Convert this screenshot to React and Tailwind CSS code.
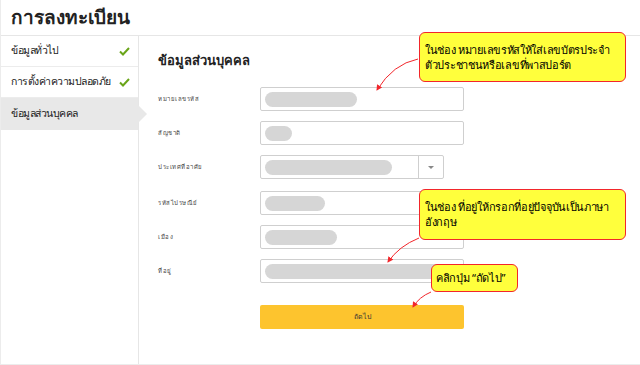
import React from 'react';

const FONT = { fontFamily: '"Noto Sans", "Liberation Sans", "DejaVu Sans", sans-serif' };

const STEPS = [
    { label: 'ข้อมูลทั่วไป', done: true },
    { label: 'การตั้งค่าความปลอดภัย', done: true },
    { label: 'ข้อมูลส่วนบุคคล', active: true },
];

function Check() {
    return (
        <svg width="11" height="9" viewBox="0 0 11 9" className="shrink-0">
            <path d="M1 4.5 L4 7.5 L10 1" fill="none" stroke="#6aa51a" strokeWidth="2" />
        </svg>
    );
}

function Field({ label, pill, gap = 'mb-[10px]' }) {
    return (
        <div className={`flex items-center ${gap}`}>
            <div className="w-[102px] text-[6px] text-[#444] tracking-[0.5px]">{label}</div>
            <div className="w-[204px] h-[24px] border border-[#cfcfcf] rounded-[2px] flex items-center px-[4px]">
                <div className="h-[15px] rounded-full bg-[#d6d6d6]" style={{ width: pill }} />
            </div>
        </div>
    );
}

function Callout({ className, children }) {
    return (
        <div className={`absolute bg-[#ffff3c] border-[1.5px] border-[#f2262b] rounded-[6px] text-[11px] leading-[15px] tracking-[-0.3px] whitespace-nowrap text-black ${className}`}>
            {children}
        </div>
    );
}

export default function App() {
    return (
        <div className="relative w-[640px] h-[365px] bg-white border-l border-b border-[#ececec] overflow-hidden" style={FONT}>
            <div className="h-[36px] border-b border-[#e6e6e6] px-[10px] flex items-center">
                <h1 className="text-[19px] font-bold text-[#222] leading-none">การลงทะเบียน</h1>
            </div>

            <div className="flex h-[329px]">
                {/* steps */}
                <div className="w-[138px] border-r border-[#e6e6e6]">
                    {STEPS.map(s => (
                        <div
                            key={s.label}
                            className={`relative h-[31px] flex items-center justify-between pl-[10px] pr-[8px] text-[10.5px] text-[#222] whitespace-nowrap ${s.active ? 'bg-[#e8e8e8] h-[32px]' : 'border-b border-[#ececec]'}`}
                        >
                            <span className="tracking-[-0.5px]">{s.label}</span>
                            {s.done && <Check />}
                            {s.active && (
                                <div className="absolute right-[-9px] top-[7px] w-0 h-0 border-y-[9px] border-y-transparent border-l-[9px] border-l-[#e8e8e8]" />
                            )}
                        </div>
                    ))}
                </div>

                {/* form */}
                <div className="flex-1 pl-[19px] pt-[15px]">
                    <h2 className="text-[13px] font-bold text-[#222] leading-[18px] mb-[18px]">ข้อมูลส่วนบุคคล</h2>
                    <Field label="หมายเลขรหัส" pill={92} />
                    <Field label="สัญชาติ" pill={27} />
                    <div className="flex items-center mb-[12px]">
                        <div className="w-[102px] text-[6px] text-[#444] tracking-[0.5px]">ประเทศที่อาศัย</div>
                        <div className="w-[184px] h-[24px] border border-[#cfcfcf] rounded-[2px] flex items-center">
                            <div className="flex-1 px-[4px] flex items-center">
                                <div className="h-[15px] w-[127px] rounded-full bg-[#d6d6d6]" />
                            </div>
                            <div className="w-[25px] h-full border-l border-[#cfcfcf] flex items-center justify-center">
                                <div className="w-0 h-0 border-x-[3px] border-x-transparent border-t-[3px] border-t-[#888]" />
                            </div>
                        </div>
                    </div>
                    <Field label="รหัสไปรษณีย์" pill={60} />
                    <Field label="เมือง" pill={72} />
                    <Field label="ที่อยู่" pill={186} gap="mb-[22px]" />
                    <div className="flex">
                        <div className="w-[102px]" />
                        <button className="w-[204px] h-[24px] rounded-[2px] bg-[#fdc42e] text-[7px] text-[#333]">ถัดไป</button>
                    </div>
                </div>
            </div>

            {/* annotations */}
            <Callout className="left-[418px] top-[32px] w-[207px] h-[50px] pl-[5px] pt-[9px]">
                ในช่อง หมายเลขรหัสให้ใส่เลขบัตรประจำ<br />ตัวประชาชนหรือเลขที่พาสปอร์ต
            </Callout>
            <Callout className="left-[418px] top-[189px] w-[207px] h-[51px] pl-[5px] pt-[9px]">
                ในช่อง ที่อยู่ให้กรอกที่อยู่ปัจจุบันเป็นภาษา<br />อังกฤษ
            </Callout>
            <Callout className="left-[430px] top-[264px] w-[87px] h-[28px] pl-[4px] pt-[5px]">
                คลิกปุ่ม “ถัดไป”
            </Callout>

            <svg className="absolute inset-0 pointer-events-none" width="640" height="365">
                <defs>
                    <marker id="ah" markerWidth="6" markerHeight="6" refX="5" refY="3" orient="auto">
                        <path d="M0 0 L6 3 L0 6 Z" fill="#f2262b" />
                    </marker>
                </defs>
                <path d="M417 59 Q392 64 376 90" fill="none" stroke="#f2262b" strokeWidth="1" markerEnd="url(#ah)" />
                <path d="M418 238 Q398 246 387 262" fill="none" stroke="#f2262b" strokeWidth="1" markerEnd="url(#ah)" />
                <path d="M430 292 Q418 297 412 307" fill="none" stroke="#f2262b" strokeWidth="1" markerEnd="url(#ah)" />
            </svg>
        </div>
    );
}
